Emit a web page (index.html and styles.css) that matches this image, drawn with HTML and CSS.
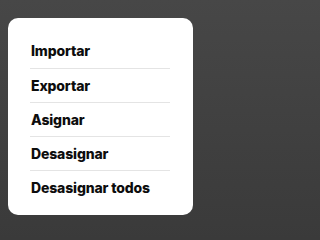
FILE: index.html
```html
<!DOCTYPE html>
<html lang="es">
<head>
<meta charset="utf-8">
<link rel="stylesheet" href="styles.css">
</head>
<body>
<div class="menu">
  <div class="item">Importar</div>
  <div class="item">Exportar</div>
  <div class="item">Asignar</div>
  <div class="item">Desasignar</div>
  <div class="item">Desasignar todos</div>
</div>
</body>
</html>
```
FILE: styles.css
```css
html, body {
  margin: 0;
  height: 100%;
}
body {
  background: linear-gradient(#474747, #3a3a3a);
  padding: 18px 0 0 8px;
  box-sizing: border-box;
  font-family: Inter, "Liberation Sans", sans-serif;
}
.menu {
  background: #fff;
  border-radius: 10px;
  width: 185px;
  height: 197px;
  box-sizing: border-box;
  padding: 14px 23px 0 22px;
  display: flex;
  flex-direction: column;
}
.item {
  height: 33px;
  display: flex;
  align-items: center;
  padding-left: 1px;
  font-size: 14px;
  font-weight: 800;
  letter-spacing: -0.15px;
  color: #0d0d0d;
  border-bottom: 1px solid #e4e4e4;
  white-space: nowrap;
}
.item:first-child {
  height: 36px;
}
.item:last-child {
  border-bottom: none;
}
```
